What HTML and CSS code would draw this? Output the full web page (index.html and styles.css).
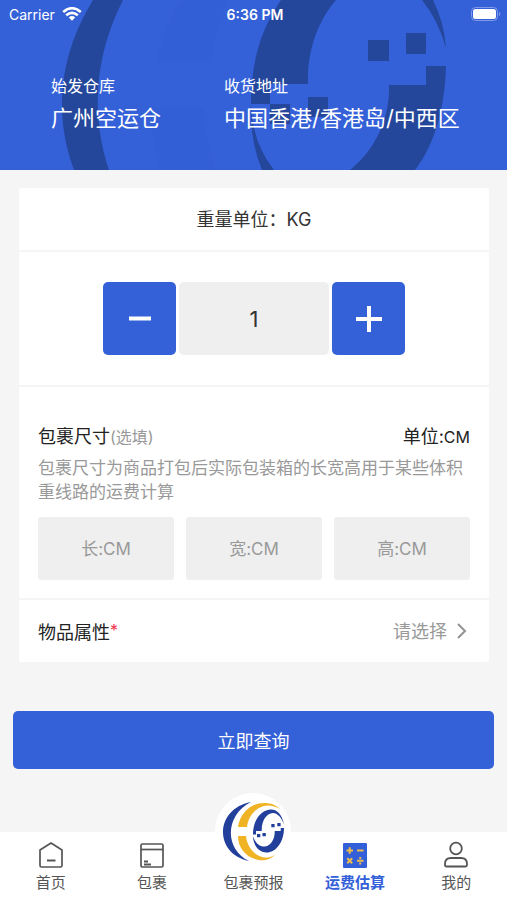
FILE: index.html
```html
<!DOCTYPE html>
<html lang="zh-CN">
<head>
<meta charset="utf-8">
<meta name="viewport" content="width=device-width, initial-scale=1">
<title>运费估算</title>
<link rel="stylesheet" href="styles.css">
</head>
<body>
<header class="hero">
  <svg class="hero-art" viewBox="0 0 507 170" preserveAspectRatio="xMidYMid slice" aria-hidden="true">
    <g fill="#1d47b4" fill-opacity=".06">
      <path d="M181 0Q162 28 157 63H211Q215 28 228 0Z"/>
      <path d="M150 108H203Q205 140 216 170H160Q152 140 150 108Z"/>
    </g>
    <g fill="#24479c">
      <path d="M93 0C58 57 54 116 74 170H109C91 116 94 57 123 0Z"/>
      <path d="M281 0H336C317 22 307 52 308 84H270V104H251C251 64 260 30 281 0Z"/>
      <path d="M270 104h20v20h-20zM308 97h20v20h-20zM368 40h21v21h-21zM406 33h20v21h-20z"/>
      <path d="M251 104Q252 142 274 170H262Q250 142 251 104Z"/>
      <path d="M422 0H433Q444 22 446 48Q438 20 422 0Z"/>
      <path d="M426 66H446C445 105 436 143 415 170H350C376 149 390 118 389 85H426Z"/>
    </g>
  </svg>
  <div class="status">
    <span class="carrier">Carrier
      <svg width="20" height="14" viewBox="0 0 20 14" fill="none" stroke="#fff" stroke-width="2.6" aria-hidden="true"><path d="M1.2 5Q10-2.6 18.8 5M4.2 8.3Q10 3.4 15.8 8.3"/><path d="M6.8 10.4Q10 7.8 13.2 10.4L10 13.8Z" fill="#fff" stroke="none"/></svg>
    </span>
    <span class="clock">6:36 PM</span>
    <svg class="battery" width="30" height="14" viewBox="0 0 30 14" aria-hidden="true"><rect x=".5" y=".5" width="26" height="13" rx="4" fill="none" stroke="#7f9be8"/><rect x="2" y="2" width="23" height="10" rx="2.5" fill="#fff"/><path d="M28 4.5Q30.5 7 28 9.5Z" fill="#7f9be8"/></svg>
  </div>
  <div class="route">
    <div class="place"><span class="place-label">始发仓库</span><span class="place-name">广州空运仓</span></div>
    <div class="place"><span class="place-label">收货地址</span><span class="place-name">中国香港/香港岛/中西区</span></div>
  </div>
</header>
<main>
  <form class="estimate">
    <div class="card">
      <h1 class="unit"><label for="weight">重量单位：KG</label></h1>
      <div class="stepper">
        <button type="button" class="step" aria-label="减少"><svg width="26" height="26" viewBox="0 0 26 26" aria-hidden="true"><path d="M2 12.5H24" stroke="#fff" stroke-width="4"/></svg></button>
        <input class="weight" id="weight" type="text" inputmode="numeric" value="1">
        <button type="button" class="step" aria-label="增加"><svg width="26" height="26" viewBox="0 0 26 26" aria-hidden="true"><path d="M0 13H26M13 0V26" stroke="#fff" stroke-width="4"/></svg></button>
      </div>
      <section class="size">
        <div class="size-head">
          <h2 class="title">包裹尺寸<span class="optional">(选填)</span></h2>
          <span class="size-unit">单位:<span class="cm">CM</span></span>
        </div>
        <p class="hint">包裹尺寸为商品打包后实际包装箱的长宽高用于某些体积重线路的运费计算</p>
        <div class="dims">
          <input class="dim" type="text" placeholder="长:CM" aria-label="长">
          <input class="dim" type="text" placeholder="宽:CM" aria-label="宽">
          <input class="dim" type="text" placeholder="高:CM" aria-label="高">
        </div>
      </section>
      <div class="attr">
        <label class="title" for="attr">物品属性<span class="required">*</span></label>
        <select class="attr-select" id="attr"><option>请选择</option></select>
        <svg width="10" height="16" viewBox="0 0 10 16" fill="none" stroke="#929292" stroke-width="2" aria-hidden="true"><path d="M1 1L8 8L1 15"/></svg>
      </div>
    </div>
    <button type="button" class="submit">立即查询</button>
  </form>
</main>
<nav class="tabs">
  <a class="tab" href="#home"><svg width="26" height="28" viewBox="0 0 26 28" fill="none" stroke="#555" stroke-width="1.7" stroke-linejoin="round" aria-hidden="true"><path d="M2 9L13 2L24 9V24.5Q24 26 22.5 26H3.5Q2 26 2 24.5Z"/><path d="M9 19.5H17.5" stroke-width="2"/></svg>首页</a>
  <a class="tab" href="#parcels"><svg width="26" height="28" viewBox="0 0 26 28" fill="none" stroke="#555" stroke-width="1.7" aria-hidden="true"><rect x="2" y="3" width="22" height="23" rx="1.5"/><path d="M2 8.5H24"/><path d="M5 20.5H9M5 23.5H12" stroke-width="2"/></svg>包裹</a>
  <a class="tab tab-main" href="#forecast">
    <span class="brand"><svg viewBox="0 0 62 62" aria-hidden="true">
      <g fill="#223f9c">
        <path d="M29 2C-8 9-8 54 27 61C2 49 3 15 29 2Z"/>
        <path d="M62 25C60 13 54 9 48 9.500C37 11 31 22 31 34.500H34V31H39.700C39.500 21 44 13.500 51 13C56 13.500 60 18 62 25Z"/>
        <path d="M58.700 28H62C62 42 54 52.500 44.500 52.500C37 52.500 31 45 31 36C33 43 38 47 43 46.500C49 46 53 39 52.700 31H58.700Z"/>
        <path d="M35 34h3.300v3.300H35zM40.500 33h3.300v3.300h-3.300zM49.300 24h3.300v3.300h-3.300zM55.300 23h3.300v3.300h-3.300z"/>
      </g>
      <g fill="#f0b323">
        <path d="M16 27C18 13 29 3 42 3C49 3 54 5 58 9C51 5 44 4 37 8C30 12 26 19 25 27Z"/>
        <path d="M16 36H24C25 46 32 56 42 57.500C46 58 50 57 54 54C48 60 42 61 37 60C25 58 16 49 16 36Z"/>
      </g>
    </svg></span>包裹预报</a>
  <a class="tab active" href="#estimate" aria-current="page"><svg width="26" height="28" viewBox="0 0 26 28" aria-hidden="true"><rect x="1" y="2" width="24" height="25" rx="1" fill="#3360d8"/><path d="M4.5 9.500H11M7.700 6.200V12.800M15 9.500H21.500M5.300 17.300L10.200 22.200M10.200 17.300L5.300 22.200M15 19.700H21.500" stroke="#eebb4c" stroke-width="2"/><path d="M17.200 16h2v2h-2zM17.200 21.500h2v2h-2z" fill="#eebb4c"/></svg>运费估算</a>
  <a class="tab" href="#me"><svg width="26" height="28" viewBox="0 0 26 28" fill="none" stroke="#555" stroke-width="1.8" aria-hidden="true"><circle cx="13" cy="7.500" r="5.800"/><path d="M2 24V23Q2 17 8 17H18Q24 17 24 23V24Q24 25.500 22.500 25.500H3.500Q2 25.500 2 24Z"/></svg>我的</a>
</nav>
</body>
</html>
```

FILE: styles.css
```css
* { box-sizing: border-box; }

body {
  margin: 0;
  min-height: 100vh;
  display: flex;
  flex-direction: column;
  background: #f5f5f5;
  color: #333;
  font-family: Inter, "Noto Sans CJK SC", sans-serif;
  font-size: 18px;
}

button, input, select { font: inherit; border: 0; margin: 0; padding: 0; border-radius: 5px; }
h1, h2, p { margin: 0; font-weight: 400; }
svg { display: block; flex: none; }
main { flex: 1; }

.hero { position: relative; overflow: hidden; background: #3561d8; color: #fff; padding-bottom: 32px; }
.hero-art { position: absolute; inset: 0; width: 100%; height: 100%; }
.status {
  position: relative;
  display: grid;
  grid-template-columns: 1fr auto 1fr;
  align-items: center;
  height: 28px;
  padding: 0 6px 0 9px;
  font-size: 14px;
}
.carrier { display: flex; align-items: center; gap: 7px; }
.clock { font-weight: 600; }
.battery { justify-self: end; }
.route { position: relative; display: grid; grid-template-columns: 173px 1fr; padding: 46px 0 0 51px; }
.place { display: flex; flex-direction: column; white-space: nowrap; }
.place-label { font-size: 16px; line-height: 24px; }
.place-name { font-size: 22px; line-height: 40px; }

.card { margin: 18px 18px 0 19px; background: #fff; border-radius: 2px; }
.unit { padding: 19px 0 17px; line-height: 26px; font-size: 18px; text-align: center; border-bottom: 2px solid #f5f5f5; }
.stepper { display: flex; justify-content: center; gap: 3px; padding: 30px 0; border-bottom: 2px solid #f5f5f5; }
.step { display: flex; align-items: center; justify-content: center; width: 73px; height: 73px; background: #3561d8; }
.weight { width: 150px; height: 73px; background: #efefef; color: #333; text-align: center; font-size: 22px; }
.size { padding: 36px 19px 18px; border-bottom: 2px solid #f5f5f5; }
.size-head { display: flex; justify-content: space-between; align-items: center; line-height: 28px; }
.title { font-size: 18px; color: #222; }
.optional { font-size: 16px; color: #999; }
.size-unit { color: #222; }
.cm { font-size: 16px; }
.hint { margin-top: 5px; font-size: 17px; line-height: 24px; color: #999; }
.dims { display: grid; grid-template-columns: repeat(3, 1fr); gap: 12px; margin-top: 13px; }
.dim { min-width: 0; width: 100%; height: 63px; border-radius: 3px; background: #efefef; text-align: center; font-size: 17px; }
.dim::placeholder { color: #999; opacity: 1; }
.attr { display: flex; align-items: center; height: 62px; padding: 0 22px 0 19px; }
.required { color: #f0344c; font-size: 16px; line-height: 1; vertical-align: 3px; }
.attr-select { flex: 1; appearance: none; background: none; color: #999; text-align-last: right; margin-right: 10px; }
.submit { display: block; width: calc(100% - 26px); height: 58px; margin: 49px 13px 32px; background: #3561d8; color: #fff; }

.tabs { display: grid; grid-template: 100% / repeat(5, 1fr); height: 68px; background: #fff; }
.tab {
  display: flex;
  flex-direction: column;
  align-items: center;
  justify-content: flex-end;
  gap: 3px;
  padding-bottom: 6px;
  color: #555;
  font-size: 15px;
  line-height: 22px;
  text-decoration: none;
}
.brand { flex: none; padding: 7px; border-radius: 50%; background: #fff; }
.brand svg { width: 62px; height: 62px; }
.active { color: #3360d8; font-weight: 700; }
```
